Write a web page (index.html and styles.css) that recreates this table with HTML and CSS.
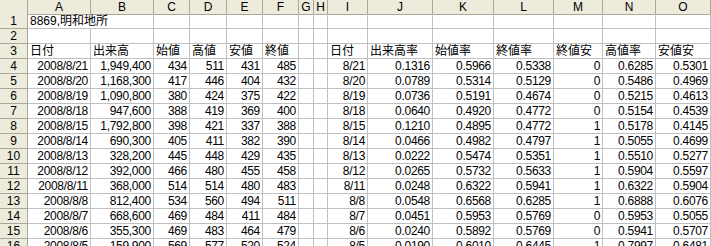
FILE: index.html
```html
<!DOCTYPE html>
<html lang="ja">
<head>
<meta charset="utf-8">
<title>8869 明和地所</title>
<link rel="stylesheet" href="styles.css">
</head>
<body>
<div class="sheet">
  <div class="row colhead">
    <div class="corner"></div>
    <div class="ch">A</div><div class="ch">B</div><div class="ch">C</div><div class="ch">D</div><div class="ch">E</div><div class="ch">F</div><div class="ch">G</div><div class="ch">H</div><div class="ch">I</div><div class="ch">J</div><div class="ch">K</div><div class="ch">L</div><div class="ch">M</div><div class="ch">N</div><div class="ch">O</div>
  </div>
  <div class="row">
    <div class="rh">1</div>
    <div class="c t wide">8869,明和地所</div><div class="c"></div><div class="c"></div><div class="c"></div><div class="c"></div><div class="c"></div><div class="c"></div><div class="c"></div><div class="c"></div><div class="c"></div><div class="c"></div><div class="c"></div><div class="c"></div><div class="c"></div>
  </div>
  <div class="row">
    <div class="rh">2</div>
    <div class="c"></div><div class="c"></div><div class="c"></div><div class="c"></div><div class="c"></div><div class="c"></div><div class="c"></div><div class="c"></div><div class="c"></div><div class="c"></div><div class="c"></div><div class="c"></div><div class="c"></div><div class="c"></div><div class="c"></div>
  </div>
  <div class="row">
    <div class="rh">3</div>
    <div class="c t">日付</div><div class="c t">出来高</div><div class="c t">始値</div><div class="c t">高値</div><div class="c t">安値</div><div class="c t">終値</div><div class="c"></div><div class="c"></div><div class="c t">日付</div><div class="c t">出来高率</div><div class="c t">始値率</div><div class="c t">終値率</div><div class="c t">終値安</div><div class="c t">高値率</div><div class="c t">安値安</div>
  </div>
  <div class="row">
    <div class="rh">4</div>
    <div class="c n">2008/8/21</div><div class="c n">1,949,400</div><div class="c n">434</div><div class="c n">511</div><div class="c n">431</div><div class="c n">485</div><div class="c"></div><div class="c"></div><div class="c n">8/21</div><div class="c n">0.1316</div><div class="c n">0.5966</div><div class="c n">0.5338</div><div class="c n">0</div><div class="c n">0.6285</div><div class="c n">0.5301</div>
  </div>
  <div class="row">
    <div class="rh">5</div>
    <div class="c n">2008/8/20</div><div class="c n">1,168,300</div><div class="c n">417</div><div class="c n">446</div><div class="c n">404</div><div class="c n">432</div><div class="c"></div><div class="c"></div><div class="c n">8/20</div><div class="c n">0.0789</div><div class="c n">0.5314</div><div class="c n">0.5129</div><div class="c n">0</div><div class="c n">0.5486</div><div class="c n">0.4969</div>
  </div>
  <div class="row">
    <div class="rh">6</div>
    <div class="c n">2008/8/19</div><div class="c n">1,090,800</div><div class="c n">380</div><div class="c n">424</div><div class="c n">375</div><div class="c n">422</div><div class="c"></div><div class="c"></div><div class="c n">8/19</div><div class="c n">0.0736</div><div class="c n">0.5191</div><div class="c n">0.4674</div><div class="c n">0</div><div class="c n">0.5215</div><div class="c n">0.4613</div>
  </div>
  <div class="row">
    <div class="rh">7</div>
    <div class="c n">2008/8/18</div><div class="c n">947,600</div><div class="c n">388</div><div class="c n">419</div><div class="c n">369</div><div class="c n">400</div><div class="c"></div><div class="c"></div><div class="c n">8/18</div><div class="c n">0.0640</div><div class="c n">0.4920</div><div class="c n">0.4772</div><div class="c n">0</div><div class="c n">0.5154</div><div class="c n">0.4539</div>
  </div>
  <div class="row">
    <div class="rh">8</div>
    <div class="c n">2008/8/15</div><div class="c n">1,792,800</div><div class="c n">398</div><div class="c n">421</div><div class="c n">337</div><div class="c n">388</div><div class="c"></div><div class="c"></div><div class="c n">8/15</div><div class="c n">0.1210</div><div class="c n">0.4895</div><div class="c n">0.4772</div><div class="c n">1</div><div class="c n">0.5178</div><div class="c n">0.4145</div>
  </div>
  <div class="row">
    <div class="rh">9</div>
    <div class="c n">2008/8/14</div><div class="c n">690,300</div><div class="c n">405</div><div class="c n">411</div><div class="c n">382</div><div class="c n">390</div><div class="c"></div><div class="c"></div><div class="c n">8/14</div><div class="c n">0.0466</div><div class="c n">0.4982</div><div class="c n">0.4797</div><div class="c n">1</div><div class="c n">0.5055</div><div class="c n">0.4699</div>
  </div>
  <div class="row">
    <div class="rh">10</div>
    <div class="c n">2008/8/13</div><div class="c n">328,200</div><div class="c n">445</div><div class="c n">448</div><div class="c n">429</div><div class="c n">435</div><div class="c"></div><div class="c"></div><div class="c n">8/13</div><div class="c n">0.0222</div><div class="c n">0.5474</div><div class="c n">0.5351</div><div class="c n">1</div><div class="c n">0.5510</div><div class="c n">0.5277</div>
  </div>
  <div class="row">
    <div class="rh">11</div>
    <div class="c n">2008/8/12</div><div class="c n">392,000</div><div class="c n">466</div><div class="c n">480</div><div class="c n">455</div><div class="c n">458</div><div class="c"></div><div class="c"></div><div class="c n">8/12</div><div class="c n">0.0265</div><div class="c n">0.5732</div><div class="c n">0.5633</div><div class="c n">1</div><div class="c n">0.5904</div><div class="c n">0.5597</div>
  </div>
  <div class="row">
    <div class="rh">12</div>
    <div class="c n">2008/8/11</div><div class="c n">368,000</div><div class="c n">514</div><div class="c n">514</div><div class="c n">480</div><div class="c n">483</div><div class="c"></div><div class="c"></div><div class="c n">8/11</div><div class="c n">0.0248</div><div class="c n">0.6322</div><div class="c n">0.5941</div><div class="c n">1</div><div class="c n">0.6322</div><div class="c n">0.5904</div>
  </div>
  <div class="row">
    <div class="rh">13</div>
    <div class="c n">2008/8/8</div><div class="c n">812,400</div><div class="c n">534</div><div class="c n">560</div><div class="c n">494</div><div class="c n">511</div><div class="c"></div><div class="c"></div><div class="c n">8/8</div><div class="c n">0.0548</div><div class="c n">0.6568</div><div class="c n">0.6285</div><div class="c n">1</div><div class="c n">0.6888</div><div class="c n">0.6076</div>
  </div>
  <div class="row">
    <div class="rh">14</div>
    <div class="c n">2008/8/7</div><div class="c n">668,600</div><div class="c n">469</div><div class="c n">484</div><div class="c n">411</div><div class="c n">484</div><div class="c"></div><div class="c"></div><div class="c n">8/7</div><div class="c n">0.0451</div><div class="c n">0.5953</div><div class="c n">0.5769</div><div class="c n">0</div><div class="c n">0.5953</div><div class="c n">0.5055</div>
  </div>
  <div class="row">
    <div class="rh">15</div>
    <div class="c n">2008/8/6</div><div class="c n">355,300</div><div class="c n">469</div><div class="c n">483</div><div class="c n">464</div><div class="c n">479</div><div class="c"></div><div class="c"></div><div class="c n">8/6</div><div class="c n">0.0240</div><div class="c n">0.5892</div><div class="c n">0.5769</div><div class="c n">0</div><div class="c n">0.5941</div><div class="c n">0.5707</div>
  </div>
  <div class="row">
    <div class="rh">16</div>
    <div class="c n">2008/8/5</div><div class="c n">159,900</div><div class="c n">569</div><div class="c n">577</div><div class="c n">520</div><div class="c n">524</div><div class="c"></div><div class="c"></div><div class="c n">8/5</div><div class="c n">0.0190</div><div class="c n">0.6010</div><div class="c n">0.6445</div><div class="c n">1</div><div class="c n">0.7997</div><div class="c n">0.6481</div>
  </div>
</div>
</body>
</html>
```

FILE: styles.css
```css
html, body {
  margin: 0;
  padding: 0;
  background: #ffffff;
}

body {
  font-family: "Liberation Sans", "Noto Sans CJK JP", sans-serif;
  font-size: 12px;
  color: #000000;
  overflow: hidden;
  height: 246px;
}

.sheet {
  display: flex;
  flex-direction: column;
  width: 711px;
}

.row {
  display: grid;
  grid-template-columns: 28px 63px 63px 36px 37px 36px 36px 15px 14px 40px 65px 61px 60px 49px 53px 55px;
  height: 15px;
  flex: none;
}

.row > div {
  box-sizing: border-box;
  white-space: nowrap;
  line-height: 14px;
}

.colhead {
  height: 14px;
}

.corner,
.ch {
  background: #ecebdc;
  border-right: 1px solid #aca899;
  border-bottom: 1px solid #aca899;
  text-align: center;
  line-height: 13px;
}

.rh {
  background: #ecebdc;
  border-right: 1px solid #aca899;
  border-bottom: 1px solid #aca899;
  text-align: center;
}

.c {
  border-right: 1px solid #c0c0c0;
  border-bottom: 1px solid #c0c0c0;
}

.c.wide {
  grid-column: span 2;
}

.t {
  text-align: left;
  padding-left: 2px;
  font-family: "Liberation Sans", "Noto Sans CJK JP", sans-serif;
}

.n {
  text-align: right;
  padding-right: 2px;
  letter-spacing: -0.3px;
}
```
